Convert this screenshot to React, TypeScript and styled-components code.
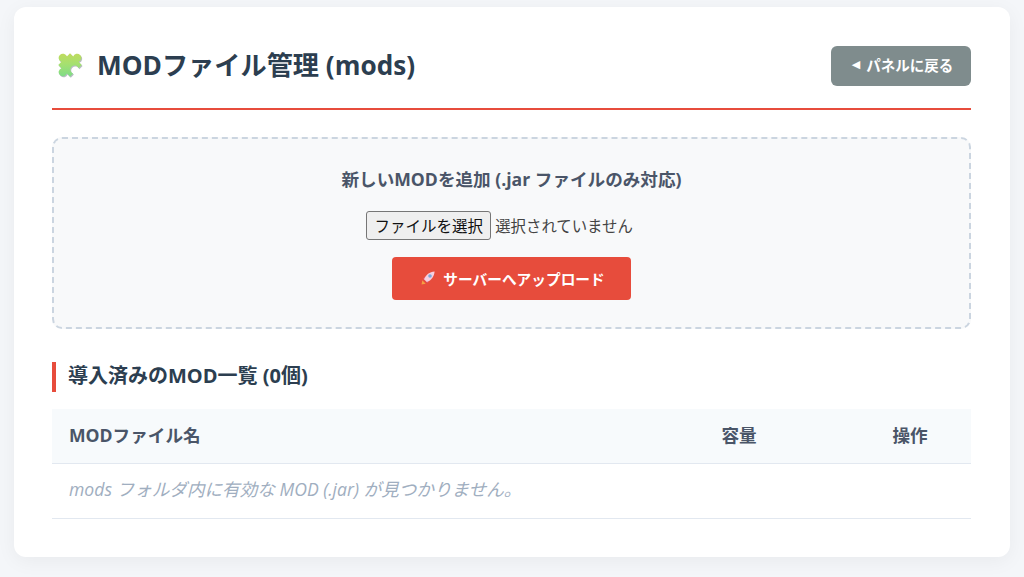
import React from "react";
import styled, { createGlobalStyle } from "styled-components";

const GlobalStyle = createGlobalStyle`
  html, body {
    margin: 0;
    padding: 0;
    background: #f4f6f9;
    font-family: "Open Sans", "Noto Sans CJK JP", sans-serif;
  }
  * { box-sizing: border-box; }
`;

const Page = styled.div`
  height: 577px;
  padding: 7px 14px 20px;
  overflow: hidden;
`;

const Card = styled.main`
  height: 550px;
  padding: 38px 39px 0 38px;
  background: #fff;
  border-radius: 12px;
  box-shadow: 0 4px 20px rgba(0, 0, 0, 0.05);
`;

const Header = styled.header`
  display: flex;
  align-items: center;
  justify-content: space-between;
  height: 65px;
  padding-bottom: 22px;
  border-bottom: 2px solid #e74c3c;
`;

const Title = styled.h1`
  display: flex;
  align-items: center;
  gap: 13px;
  margin: 0 0 2px;
  padding-left: 4px;
  color: #2c3e50;
  font-size: 26.2px;
  font-weight: 700;
  line-height: 32px;
`;

const BackButton = styled.a`
  display: flex;
  align-items: center;
  justify-content: center;
  gap: 6px;
  width: 140px;
  height: 40px;
  margin-top: 1px;
  padding: 0 0 3px 3px;
  background: #7f8c8d;
  border-radius: 6px;
  color: #fff;
  font-size: 14.5px;
  font-weight: 700;
`;

const BackArrow = styled.span`
  font-family: "DejaVu Sans", sans-serif;
  font-size: 11px;
`;

const UploadBox = styled.section`
  display: flex;
  flex-direction: column;
  align-items: center;
  height: 192px;
  margin-top: 27px;
  padding-top: 28px;
  background: #f8f9fa;
  border: 2px dashed #cbd5e0;
  border-radius: 10px;
`;

const UploadLabel = styled.div`
  color: #4a5568;
  font-size: 17.6px;
  font-weight: 700;
  line-height: 24px;
`;

const FileRow = styled.div`
  display: flex;
  align-items: center;
  gap: 4px;
  height: 29px;
  margin-top: 20px;
  padding-right: 24px;
  color: #444;
  font-size: 15.4px;
`;

const FileButton = styled.button`
  width: 125px;
  height: 29px;
  padding: 0;
  background: #efefef;
  border: 1px solid #767676;
  border-radius: 3px;
  color: #111;
  font-family: inherit;
  font-size: 15.5px;
`;

const UploadButton = styled.button`
  display: flex;
  align-items: center;
  justify-content: center;
  gap: 7px;
  width: 239px;
  height: 43px;
  margin-top: 17px;
  padding: 0 0 1px 2px;
  background: #e74c3c;
  border: 0;
  border-radius: 4px;
  color: #fff;
  font-family: inherit;
  font-size: 14.7px;
  font-weight: 700;
`;

const SectionTitle = styled.h2`
  height: 30px;
  margin: 33px 0 17px;
  padding-left: 12px;
  border-left: 4px solid #e74c3c;
  color: #2c3e50;
  font-size: 20px;
  font-weight: 700;
  line-height: 27px;
`;

const Table = styled.table`
  width: 100%;
  border-collapse: collapse;
  table-layout: fixed;
`;

const HeadCell = styled.th<{ $width?: number; $center?: boolean }>`
  width: ${({ $width }) => ($width ? `${$width}px` : "auto")};
  height: 54px;
  padding: 0 17px 2px;
  background: #f7fafc;
  border-bottom: 1px solid #e2e8f0;
  color: #4a5568;
  font-size: 17.6px;
  font-weight: 700;
  line-height: 24px;
  text-align: ${({ $center }) => ($center ? "center" : "left")};
`;

const EmptyCell = styled.td`
  height: 55px;
  padding: 0 17px 3px;
  border-bottom: 1px solid #e2e8f0;
  color: #a0aec0;
  font-size: 17.6px;
  font-style: italic;
  line-height: 24px;
`;

const puzzlePath =
  "M-6.500-6.500H-3A3.300 3.300 0 1 1 3-6.500H6.500V-3A3.300 3.300 0 1 1 6.500 3V6.500H3A3.300 3.300 0 1 0-3 6.500H-6.500V3A3.300 3.300 0 1 1-6.500-3Z";

const PuzzleIcon = () => (
  <svg width="28" height="28" viewBox="0 0 28 28">
    <defs>
      <linearGradient id="puzzle" gradientUnits="userSpaceOnUse" x1="3" y1="26" x2="25" y2="3">
        <stop offset="0" stopColor="#5fd89a" />
        <stop offset="0.55" stopColor="#a5e070" />
        <stop offset="1" stopColor="#d3d84f" />
      </linearGradient>
    </defs>
    <path fill="#b9bcc4" transform="translate(14.8 15) rotate(-45) scale(1.28)" d={puzzlePath} />
    <path fill="url(#puzzle)" transform="translate(14 14) rotate(-45) scale(1.28)" d={puzzlePath} />
  </svg>
);

const RocketIcon = () => (
  <svg width="16" height="16" viewBox="0 0 16 16">
    <path fill="#f59e42" d="M1.500 14.500l.8-4.200 3.400 3.400z" />
    <path fill="#e0566a" d="M2.800 8.200L6 6.500 4.400 10.400zM7.800 13.200L9.500 10 5.600 11.600z" />
    <path fill="#f6cfe0" d="M4 9.200C5.800 4.600 9.500 1.800 14.600 1.400 14.200 6.500 11.400 10.200 6.800 12z" />
    <circle cx="10" cy="6" r="1.800" fill="#7aa7dc" />
  </svg>
);

export default function App() {
  return (
    <>
      <GlobalStyle />
      <Page>
        <Card>
          <Header>
            <Title>
              <PuzzleIcon />
              MODファイル管理 (mods)
            </Title>
            <BackButton>
              <BackArrow>◀</BackArrow>
              パネルに戻る
            </BackButton>
          </Header>

          <UploadBox>
            <UploadLabel>新しいMODを追加 (.jar ファイルのみ対応)</UploadLabel>
            <FileRow>
              <FileButton>ファイルを選択</FileButton>
              選択されていません
            </FileRow>
            <UploadButton>
              <RocketIcon />
              サーバーへアップロード
            </UploadButton>
          </UploadBox>

          <SectionTitle>導入済みのMOD一覧 (0個)</SectionTitle>

          <Table>
            <thead>
              <tr>
                <HeadCell>MODファイル名</HeadCell>
                <HeadCell $width={220} $center>容量</HeadCell>
                <HeadCell $width={122} $center>操作</HeadCell>
              </tr>
            </thead>
            <tbody>
              <tr>
                <EmptyCell colSpan={3}>mods フォルダ内に有効な MOD (.jar) が見つかりません。</EmptyCell>
              </tr>
            </tbody>
          </Table>
        </Card>
      </Page>
    </>
  );
}
